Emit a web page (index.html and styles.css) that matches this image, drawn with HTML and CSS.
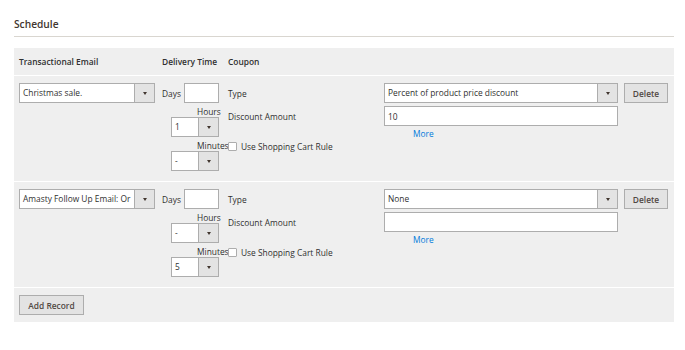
FILE: index.html
```
<!DOCTYPE html>
<html>
<head>
<meta charset="utf-8">
<link rel="stylesheet" href="styles.css">
</head>
<body>
<div class="schedule">
  <div class="title">Schedule</div>
  <div class="table">
    <div class="thead">
      <div>Transactional Email</div>
      <div>Delivery Time</div>
      <div>Coupon</div>
    </div>

    <div class="row">
      <div class="select email"><span class="txt">Christmas sale.</span><span class="arr"><i></i></span></div>
      <div class="delivery">
        <div class="days"><span>Days</span><input class="inp days-inp" type="text" value=""></div>
        <div class="dlabel">Hours</div>
        <div class="select dsel"><span class="txt">1</span><span class="arr"><i></i></span></div>
        <div class="dlabel">Minutes</div>
        <div class="select dsel"><span class="txt">-</span><span class="arr"><i></i></span></div>
      </div>
      <div class="coupon">
        <div class="cp-row"><span class="lbl">Type</span><div class="select field"><span class="txt">Percent of product price discount</span><span class="arr"><i></i></span></div></div>
        <div class="cp-row second"><span class="lbl">Discount Amount</span><input class="inp field" type="text" value="10"></div>
        <div class="cp-more"><a class="more">More</a></div>
        <div class="cp-check"><input class="chk" type="checkbox"><span>Use Shopping Cart Rule</span></div>
      </div>
      <button class="btn del">Delete</button>
    </div>

    <div class="row">
      <div class="select email"><span class="txt">Amasty Follow Up Email: Or</span><span class="arr"><i></i></span></div>
      <div class="delivery">
        <div class="days"><span>Days</span><input class="inp days-inp" type="text" value=""></div>
        <div class="dlabel">Hours</div>
        <div class="select dsel"><span class="txt">-</span><span class="arr"><i></i></span></div>
        <div class="dlabel">Minutes</div>
        <div class="select dsel"><span class="txt">5</span><span class="arr"><i></i></span></div>
      </div>
      <div class="coupon">
        <div class="cp-row"><span class="lbl">Type</span><div class="select field"><span class="txt">None</span><span class="arr"><i></i></span></div></div>
        <div class="cp-row second"><span class="lbl">Discount Amount</span><input class="inp field" type="text" value=""></div>
        <div class="cp-more"><a class="more">More</a></div>
        <div class="cp-check"><input class="chk" type="checkbox"><span>Use Shopping Cart Rule</span></div>
      </div>
      <button class="btn del">Delete</button>
    </div>

    <div class="tfoot">
      <button class="btn add">Add Record</button>
    </div>
  </div>
</div>
</body>
</html>
```

FILE: styles.css
```
* { box-sizing: border-box; }
html, body { margin: 0; padding: 0; background: #fff; }
body {
  font-family: "Open Sans", "DejaVu Sans", sans-serif;
  font-size: 8.4px;
  color: #303030;
}
.schedule { padding: 17px 11px 0 14px; }
.title {
  font-size: 10.2px;
  font-weight: 600;
  line-height: 15px;
  color: #41362f;
  padding-bottom: 4px;
  border-bottom: 1px solid #d9d6d0;
  margin-bottom: 11px;
}
.table { background: #efefef; }
.thead {
  display: grid;
  grid-template-columns: 143px 66px auto;
  align-items: center;
  height: 28px;
  padding-left: 5px;
  border-bottom: 1px solid #fff;
  font-weight: 600;
}
.row {
  display: grid;
  grid-template-columns: 143px 66px 396px 44px;
  align-items: start;
  padding: 7px 0 10px 5px;
  border-bottom: 1px solid #fff;
}
.tfoot { padding: 7px 0 7px 5px; }

.select {
  display: flex;
  height: 20px;
  border: 1px solid #adadad;
  background: #fff;
}
.select .txt {
  flex: 1;
  min-width: 0;
  overflow: hidden;
  white-space: nowrap;
  padding-left: 3px;
  line-height: 18px;
}
.select .arr {
  width: 20px;
  flex: none;
  background: #e3e3e3;
  border-left: 1px solid #adadad;
  display: flex;
  align-items: center;
  justify-content: center;
}
.select .arr i {
  width: 0;
  height: 0;
  border-left: 2.5px solid transparent;
  border-right: 2.5px solid transparent;
  border-top: 3px solid #41362f;
}
.email { width: 136px; }

.inp {
  height: 20px;
  border: 1px solid #adadad;
  background: #fff;
  font: inherit;
  color: #303030;
  padding: 0 3px;
  margin: 0;
  outline: none;
}

.delivery { width: 57px; }
.days {
  display: flex;
  align-items: center;
  justify-content: space-between;
  height: 20px;
}
.days-inp { width: 35px; }
.dlabel {
  height: 14px;
  padding-top: 3px;
  line-height: 11px;
  padding-left: 35px;
  white-space: nowrap;
}
.dsel { width: 48px; margin-left: 9px; }

.coupon { display: flex; flex-direction: column; }
.cp-row { display: flex; align-items: center; height: 20px; }
.cp-row.second { margin-top: 3px; }
.cp-row .lbl { width: 156px; flex: none; }
.field { width: 234px; }
.cp-more { height: 15px; line-height: 16px; padding-left: 185px; }
.more { color: #007bdb; text-decoration: none; }
.cp-check { display: flex; align-items: center; height: 10px; white-space: nowrap; }
.chk {
  appearance: none;
  -webkit-appearance: none;
  width: 9px;
  height: 9px;
  margin: 0 4px 0 0;
  border: 1px solid #adadad;
  border-radius: 1px;
  background: #fff;
}

.btn {
  height: 20px;
  padding: 0;
  border: 1px solid #adadad;
  background: #e3e3e3;
  color: #514943;
  font-family: inherit;
  font-size: 8.4px;
  font-weight: 600;
}
.del { width: 44px; }
.add { width: 65px; }
```
